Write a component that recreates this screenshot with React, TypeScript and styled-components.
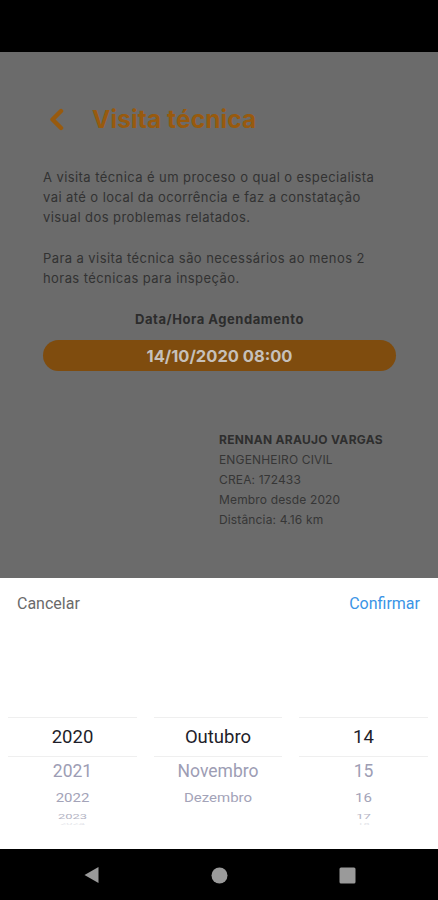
import styled, { createGlobalStyle } from 'styled-components';

const GlobalStyle = createGlobalStyle`
  html, body {
    margin: 0;
    padding: 0;
    background: #000;
  }
  * {
    box-sizing: border-box;
  }
`;

const Phone = styled.div`
  width: 438px;
  height: 900px;
  display: flex;
  flex-direction: column;
  overflow: hidden;
  background: #000;
`;

const StatusBar = styled.div`
  height: 52px;
  flex-shrink: 0;
  background: #000;
`;

// page behind the dimmed backdrop
const Screen = styled.div`
  height: 526px;
  flex-shrink: 0;
  background: #6b6b6b;
  padding: 52px 42px 0 43px;
  display: flex;
  flex-direction: column;
  font-family: Inter, 'Open Sans', sans-serif;
`;

const Header = styled.div`
  height: 30px;
  display: flex;
  align-items: center;
  gap: 28px;
  padding-left: 5px;
`;

const Title = styled.h1`
  margin: 0;
  font-size: 24.5px;
  font-weight: 700;
  color: #985a0e;
  letter-spacing: 0.1px;
`;

const Paragraph = styled.p<{ $top: number }>`
  margin: ${(p) => p.$top}px 0 0;
  font-size: 13px;
  line-height: 20px;
  letter-spacing: 0.42px;
  color: #323232;
  white-space: nowrap;
`;

const Label = styled.div`
  margin-top: 21px;
  text-align: center;
  font-size: 13px;
  line-height: 20px;
  letter-spacing: 0.55px;
  font-weight: 700;
  color: #2c2c2c;
`;

const DatePill = styled.div`
  margin-top: 11px;
  height: 31px;
  border-radius: 16px;
  background: #7f4c0e;
  display: flex;
  align-items: center;
  justify-content: center;
  font-size: 16.5px;
  font-weight: 700;
  color: #c6c0ba;
`;

const Profile = styled.div`
  margin-top: 59px;
  display: grid;
  grid-template-columns: 176px 1fr;
`;

const Avatar = styled.div`
  height: 100px;
`;

const Info = styled.div`
  display: flex;
  flex-direction: column;
`;

const InfoLine = styled.div<{ $bold?: boolean }>`
  font-size: 12px;
  line-height: 20px;
  letter-spacing: ${(p) => (p.$bold ? 0.3 : 0.15)}px;
  font-weight: ${(p) => (p.$bold ? 700 : 400)};
  color: ${(p) => (p.$bold ? '#2e2e2e' : '#363636')};
`;

const Sheet = styled.div`
  height: 271px;
  flex-shrink: 0;
  background: #fff;
  display: flex;
  flex-direction: column;
  font-family: Roboto, 'Liberation Sans', sans-serif;
  overflow: hidden;
`;

const SheetBar = styled.div`
  height: 50px;
  display: flex;
  align-items: center;
  justify-content: space-between;
  padding: 0 18px 0 17px;
`;

const SheetButton = styled.span<{ $primary?: boolean }>`
  font-size: 16px;
  color: ${(p) => (p.$primary ? '#3a94e6' : '#6a6a6a')};
`;

const Wheels = styled.div`
  display: grid;
  grid-template-columns: 129px 128px 129px;
  gap: 0 17px;
  padding: 89px 0 0 8px;
`;

const Wheel = styled.div`
  display: flex;
  flex-direction: column;
  align-items: stretch;
`;

const Selected = styled.div`
  height: 40px;
  border-top: 1px solid #efefef;
  border-bottom: 1px solid #efefef;
  display: flex;
  align-items: center;
  justify-content: center;
  font-size: 18.5px;
  color: #1e1e2a;
`;

const Option = styled.div<{ $h: number; $size: number; $squash: number; $color: string }>`
  height: ${(p) => p.$h}px;
  display: flex;
  align-items: center;
  justify-content: center;
  font-size: ${(p) => p.$size}px;
  color: ${(p) => p.$color};
  transform: scaleY(${(p) => p.$squash});
  overflow: hidden;
`;

const NavBar = styled.div`
  flex: 1;
  background: #000;
  display: flex;
  align-items: center;
  justify-content: center;
  gap: 111px;
  padding-top: 1px;
`;

const rows = [
  { h: 28, size: 17.5, squash: 1, color: '#9d9db4' },
  { h: 26, size: 15, squash: 0.85, color: '#a3a3b8' },
  { h: 11, size: 13, squash: 0.55, color: '#b4b4c4' },
  { h: 4, size: 11, squash: 0.3, color: '#c8c8d4' },
];

const wheels = [
  { value: '2020', next: ['2021', '2022', '2023', '2024'] },
  { value: 'Outubro', next: ['Novembro', 'Dezembro', '', ''] },
  { value: '14', next: ['15', '16', '17', '18'] },
];

const BackChevron = () => (
  <svg width="16" height="23" viewBox="0 0 16 23">
    <path
      d="M13 3 L4.5 11.5 L13 20"
      fill="none"
      stroke="#985a0e"
      strokeWidth="4.4"
      strokeLinecap="round"
      strokeLinejoin="round"
    />
  </svg>
);

export default function App() {
  return (
    <Phone>
      <GlobalStyle />
      <StatusBar />
      <Screen>
        <Header>
          <BackChevron />
          <Title>Visita técnica</Title>
        </Header>
        <Paragraph $top={33}>
          A visita técnica é um proceso o qual o especialista
          <br />
          vai até o local da ocorrência e faz a constatação
          <br />
          visual dos problemas relatados.
        </Paragraph>
        <Paragraph $top={21}>
          Para a visita técnica são necessários ao menos 2
          <br />
          horas técnicas para inspeção.
        </Paragraph>
        <Label>Data/Hora Agendamento</Label>
        <DatePill>14/10/2020 08:00</DatePill>
        <Profile>
          <Avatar />
          <Info>
            <InfoLine $bold>RENNAN ARAUJO VARGAS</InfoLine>
            <InfoLine>ENGENHEIRO CIVIL</InfoLine>
            <InfoLine>CREA: 172433</InfoLine>
            <InfoLine>Membro desde 2020</InfoLine>
            <InfoLine>Distância: 4.16 km</InfoLine>
          </Info>
        </Profile>
      </Screen>
      <Sheet>
        <SheetBar>
          <SheetButton>Cancelar</SheetButton>
          <SheetButton $primary>Confirmar</SheetButton>
        </SheetBar>
        <Wheels>
          {wheels.map((w) => (
            <Wheel key={w.value}>
              <Selected>{w.value}</Selected>
              {rows.map((r, i) => (
                <Option key={i} $h={r.h} $size={r.size} $squash={r.squash} $color={r.color}>
                  {w.next[i]}
                </Option>
              ))}
            </Wheel>
          ))}
        </Wheels>
      </Sheet>
      <NavBar>
        <svg width="17" height="18" viewBox="0 0 17 18">
          <path d="M15.5 1 L15.5 17 L1.5 9 Z" fill="#9a9a9a" />
        </svg>
        <svg width="17" height="17" viewBox="0 0 17 17">
          <circle cx="8.5" cy="8.5" r="8" fill="#9a9a9a" />
        </svg>
        <svg width="17" height="17" viewBox="0 0 17 17">
          <rect x="0.5" y="0.5" width="16" height="16" rx="1.5" fill="#9a9a9a" />
        </svg>
      </NavBar>
    </Phone>
  );
}
